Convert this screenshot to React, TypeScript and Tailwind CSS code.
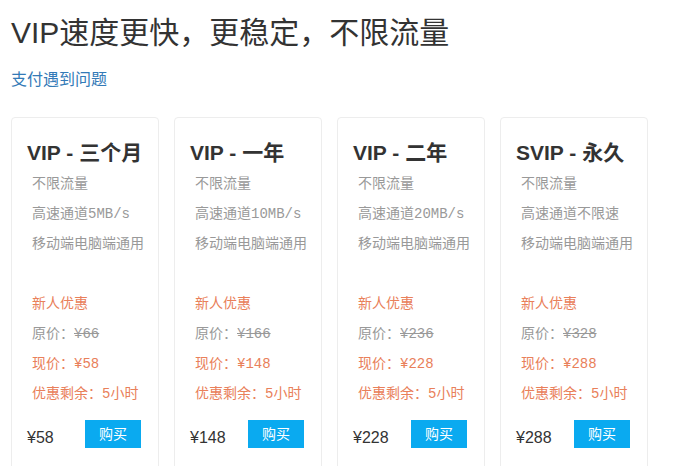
const plans = [
  { name: "VIP - 三个月", speed: "高速通道5MB/s", was: "¥66", now: "¥58" },
  { name: "VIP - 一年", speed: "高速通道10MB/s", was: "¥166", now: "¥148" },
  { name: "VIP - 二年", speed: "高速通道20MB/s", was: "¥236", now: "¥228" },
  { name: "SVIP - 永久", speed: "高速通道不限速", was: "¥328", now: "¥288" },
];

const sans = "font-['Liberation_Sans','Noto_Sans_CJK_SC',sans-serif]";
const mono = "font-['Liberation_Mono','Noto_Sans_CJK_SC',monospace]";

function PlanCard({ plan }: { plan: (typeof plans)[number] }) {
  return (
    <div className="w-[148px] shrink-0 rounded border border-[#ededed] bg-white pb-8">
      <h3 className={`${sans} pl-[15px] pt-[20px] text-[21px] leading-[30px] font-bold text-[#333]`}>
        {plan.name}
      </h3>
      <ul className={`${mono} mt-[1px] pl-[20px] text-[14px] leading-[30px]`}>
        <li className="text-[#999]">不限流量</li>
        <li className="text-[#999]">{plan.speed}</li>
        <li className="text-[#999]">移动端电脑端通用</li>
        <li className="h-[30px]" />
        <li className="text-[#e9805a]">新人优惠</li>
        <li className="text-[#999]">
          原价：<span className="line-through">{plan.was}</span>
        </li>
        <li className="text-[#e9805a]">现价：{plan.now}</li>
        <li className="text-[#e9805a]">优惠剩余：5小时</li>
      </ul>
      <div className="mt-[9px] flex items-center justify-between pl-[15px] pr-[17px]">
        <span className={`${sans} mt-2 text-[16px] text-[#333]`}>{plan.now}</span>
        <button
          className={`${sans} h-7 w-14 bg-[#0aaaf0] text-[14px] text-white`}
        >
          购买
        </button>
      </div>
    </div>
  );
}

export default function App() {
  return (
    <div className="min-h-screen bg-white px-[11px] pt-[16px]">
      <h2 className={`${sans} text-[30px] leading-[33px] text-[#333]`}>
        VIP速度更快，更稳定，不限流量
      </h2>
      <a href="#" className={`${sans} mt-[20px] block text-[16px] leading-[22px] text-[#337ab7]`}>
        支付遇到问题
      </a>
      <div className="mt-[26px] flex gap-[15px]">
        {plans.map((p) => (
          <PlanCard key={p.name} plan={p} />
        ))}
      </div>
    </div>
  );
}
